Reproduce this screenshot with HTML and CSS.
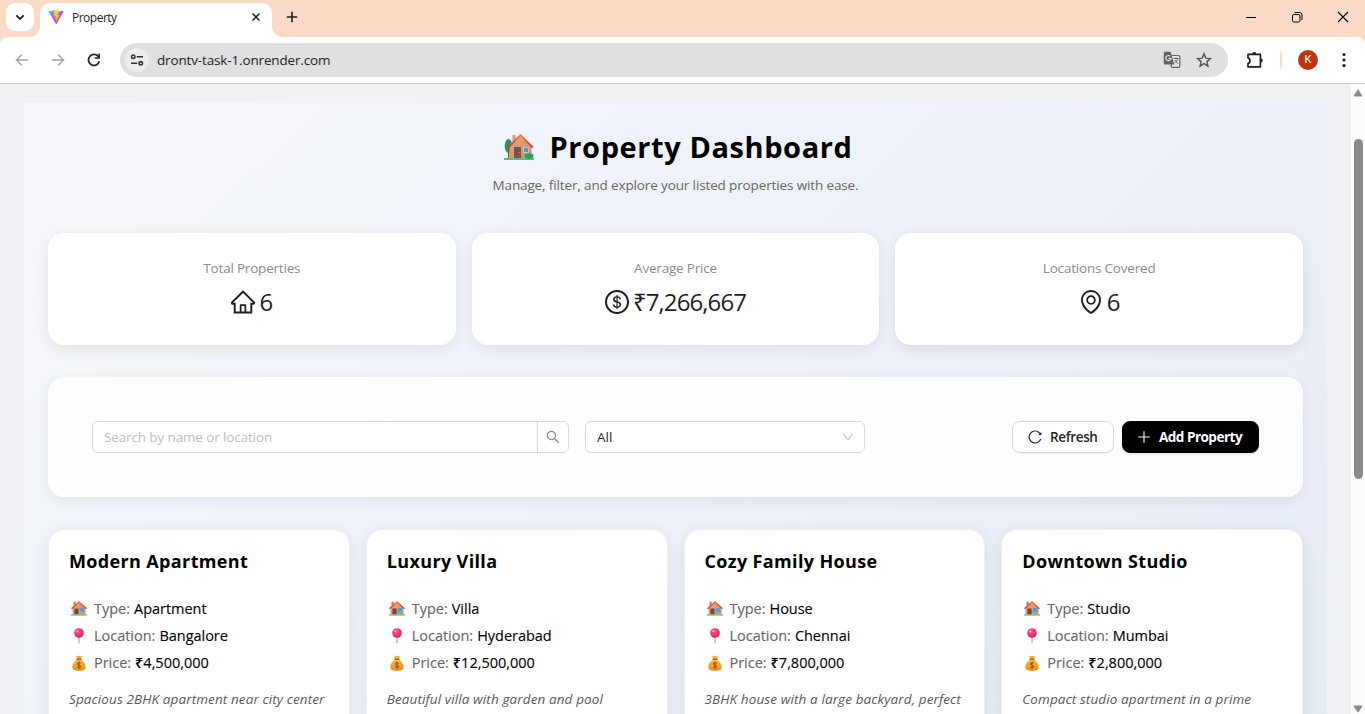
FILE: index.html
```html
<!DOCTYPE html>
<html lang="en">
<head>
<meta charset="utf-8">
<title>Property</title>
<link rel="stylesheet" href="styles.css">
</head>
<body>
<svg class="defs" width="0" height="0" aria-hidden="true">
  <defs>
    <linearGradient id="wall" x1="0" y1="0" x2="1" y2="1"><stop offset="0" stop-color="#dfab80"/><stop offset="1" stop-color="#c9906a"/></linearGradient>
    <linearGradient id="roof" x1="0" y1="0" x2="0" y2="1"><stop offset="0" stop-color="#f4793f"/><stop offset="1" stop-color="#d8343c"/></linearGradient>
    <radialGradient id="ball" cx=".4" cy=".35" r=".7"><stop offset="0" stop-color="#ff5a8c"/><stop offset="1" stop-color="#dc1c58"/></radialGradient>
    <linearGradient id="bag" x1="0" y1="0" x2="0" y2="1"><stop offset="0" stop-color="#fdbd3a"/><stop offset="1" stop-color="#e88a1c"/></linearGradient>
    <linearGradient id="vite" x1="0" y1="0" x2="1" y2="1"><stop offset="0" stop-color="#41d1ff"/><stop offset=".6" stop-color="#a24bfe"/><stop offset="1" stop-color="#bd34fe"/></linearGradient>
    <linearGradient id="bolt" x1="0" y1="0" x2="0" y2="1"><stop offset="0" stop-color="#ffdd35"/><stop offset="1" stop-color="#ff9a00"/></linearGradient>
  </defs>
  <symbol id="house-tree" viewBox="0 0 32 28">
    <ellipse cx="5.500" cy="13" rx="3.800" ry="7" fill="#2f9465"/>
    <path d="M5 14h1.500v11H5z" fill="#7a5548"/>
    <path d="M9.500 2h3v6h-3z" fill="#d99b77"/>
    <path d="M6.500 14L17.500 3.500 28.500 14v11h-22z" fill="url(#wall)"/>
    <path d="M11 14h7v11h-7z" fill="#7b5149"/>
    <circle cx="16.300" cy="19.500" r=".6" fill="#e3b55a"/>
    <path d="M20.500 14.500h5v5h-5z" fill="#2fa4e8" stroke="#f2c7a2" stroke-width=".8"/>
    <path d="M5.200 14.500L17.500 2.200 29.800 14.500" fill="none" stroke="url(#roof)" stroke-width="1.900"/>
    <path d="M1 25h30v2H1z" fill="#4fc184"/>
    <ellipse cx="26" cy="23" rx="4.500" ry="2.800" fill="#2f9a62"/>
  </symbol>
  <symbol id="house" viewBox="0 0 16 15">
    <path d="M2.500.800h2.300v4H2.500z" fill="#c9785c"/>
    <path d="M1.500 7L8 1l6.500 6v6.500h-13z" fill="url(#wall)"/>
    <path d="M3.500 7.500h4v6h-4z" fill="#70463f"/>
    <path d="M9 7h3.700v3.500H9z" fill="#2fa8ee"/>
    <path d="M.600 7.700L8 .900l7.400 6.800" fill="none" stroke="url(#roof)" stroke-width="1.500"/>
    <path d="M0 13.300h16v1.300H0z" fill="#4fc184"/>
  </symbol>
  <symbol id="pin" viewBox="0 0 16 16">
    <path d="M7.400 9h1.300v6.300H7.400z" fill="#b7a5cd"/>
    <circle cx="8" cy="5" r="4.800" fill="url(#ball)"/>
    <ellipse cx="6.300" cy="3.200" rx="1.300" ry=".9" fill="#ff9dbd"/>
  </symbol>
  <symbol id="money" viewBox="0 0 16 16">
    <path d="M5 .600L6.800 1.500 8 .400l1.300 1.100L11 .600 10.200 4H6z" fill="#f5a52a"/>
    <path d="M6 4.500C3 6.500 1.300 9.500 1.300 12c0 3 2.200 3.700 6.700 3.700s6.700-.700 6.700-3.700c0-2.500-1.700-5.500-4.700-7.500z" fill="url(#bag)"/>
    <path d="M5.500 3.700h5v1.300h-5z" fill="#a5602b"/>
    <path d="M9.700 8.200C9 7.300 6.500 7.300 6.500 8.900c0 1.700 3.200 1 3.200 2.700 0 1.500-2.600 1.600-3.400.500M8 6.800v6.600" fill="none" stroke="#8a4a20" stroke-width="1"/>
  </symbol>
</svg>

<header class="tabstrip">
  <div class="tab-search"><svg width="10" height="7" viewBox="0 0 10 7"><path d="M1.300 1.300L5 5l3.700-3.700" fill="none" stroke="#1f1f1f" stroke-width="1.800"/></svg></div>
  <div class="tab">
    <svg class="favicon" width="16" height="16" viewBox="0 0 16 16"><path d="M.300 2.200L7.500.900v3L13 1.700l2.700.500L8.200 15.500z" fill="url(#vite)"/><path d="M11.300.300L6 1.400 5.600 7.800l2-.500-.6 3.400 1.300-.4-.8 4L11.800 6l-2.100.400z" fill="url(#bolt)"/></svg>
    <span class="tab-title">Property</span>
    <svg class="tab-close" width="10" height="10" viewBox="0 0 10 10"><path d="M1.500 1.500l7 7M8.500 1.500l-7 7" stroke="#1f1f1f" stroke-width="1.500"/></svg>
  </div>
  <svg class="new-tab" width="12" height="12" viewBox="0 0 12 12"><path d="M6 .800v10.400M.800 6h10.400" stroke="#1f1f1f" stroke-width="1.600"/></svg>
  <div class="window-controls">
    <svg width="12" height="12" viewBox="0 0 12 12"><path d="M1 6.500h10" stroke="#000" stroke-width="1"/></svg>
    <svg width="12" height="12" viewBox="0 0 12 12"><rect x="1.500" y="3.500" width="7.500" height="7.500" rx="1.400" fill="none" stroke="#000"/><path d="M3.500 1.500h5.200a2.300 2.300 0 012.300 2.300V9" fill="none" stroke="#000"/></svg>
    <svg width="12" height="12" viewBox="0 0 12 12"><path d="M1 1l10 10M11 1L1 11" stroke="#000" stroke-width="1.100"/></svg>
  </div>
</header>

<nav class="toolbar">
  <svg class="nav-icon" width="14" height="14" viewBox="0 0 14 14"><path d="M13.200 7H1.700M7 1.500L1.500 7 7 12.500" fill="none" stroke="#a5a5a5" stroke-width="1.600"/></svg>
  <svg class="nav-icon" width="14" height="14" viewBox="0 0 14 14"><path d="M.800 7h11.500M7 1.500L12.500 7 7 12.500" fill="none" stroke="#a5a5a5" stroke-width="1.600"/></svg>
  <svg class="nav-icon" width="14" height="14" viewBox="0 0 14 14"><path d="M12.300 8.300A5.500 5.500 0 1 1 11 3.200l1.200 1.200" fill="none" stroke="#1f1f1f" stroke-width="1.700"/><path d="M12.900.600v5.200H7.700V4.300h3.600V.600z" fill="#1f1f1f"/></svg>
  <div class="omnibox">
    <div class="site-info"><svg width="14" height="12" viewBox="0 0 14 12"><g fill="none" stroke="#333" stroke-width="1.600"><circle cx="3.200" cy="2.700" r="1.700"/><path d="M6.800 2.700H13M1 9.300h6.200"/><circle cx="10.800" cy="9.300" r="1.700"/></g></svg></div>
    <span class="url">drontv-task-1.onrender.com</span>
    <svg class="translate" width="18" height="18" viewBox="0 0 18 18"><rect x="8.200" y="4.500" width="8.600" height="11.800" rx="1" fill="#e8e8e8" stroke="#5f6368" stroke-width="1.200"/><path d="M2 .800h5.500l3.800 12.700H2a1.200 1.200 0 01-1.200-1.200V2A1.200 1.200 0 012 .800z" fill="#5f6368"/><path d="M7.200 5.200A2.600 2.600 0 1 0 8 7.500H5.500" fill="none" stroke="#e6e6e6" stroke-width="1.200"/><path d="M10.500 7.500h5M13 6.300v1.200M14.700 7.500c-.5 2-1.800 3.500-3.200 4.700M11.800 9l3.200 3.800" fill="none" stroke="#5f6368" stroke-width="1"/></svg>
    <svg width="16" height="16" viewBox="0 0 16 16"><path d="M8 1.800l1.800 4.300 4.700.400-3.600 3.100 1.100 4.600L8 11.700l-4 2.500 1.100-4.600-3.600-3.100 4.700-.4z" fill="none" stroke="#54575b" stroke-width="1.400"/></svg>
  </div>
  <svg class="extension" width="18" height="18" viewBox="0 0 18 18"><path d="M2 3.400h12.400v12.400H2v-3.300c2.600-.500 2.600-5.100 0-5.600z" fill="none" stroke="#1f1f1f" stroke-width="1.700" stroke-linejoin="round"/><path d="M6.200 3a2 2 0 014 0zM14.800 7.500a2 2 0 010 4z" fill="#1f1f1f"/></svg>
  <span class="separator"></span>
  <span class="avatar">K</span>
  <svg class="menu" width="4" height="16" viewBox="0 0 4 16" fill="#1f1f1f"><circle cx="2" cy="2.500" r="1.600"/><circle cx="2" cy="8" r="1.600"/><circle cx="2" cy="13.500" r="1.600"/></svg>
</nav>

<div class="viewport">
  <main class="page">
    <div class="dashboard">
      <h1 class="title"><svg width="32" height="28"><use href="#house-tree"/></svg><span>Property Dashboard</span></h1>
      <p class="subtitle">Manage, filter, and explore your listed properties with ease.</p>

      <section class="stats">
        <div class="stat"><span class="stat-label">Total Properties</span>
          <div class="stat-value"><svg width="24" height="24" viewBox="64 64 896 896" fill="currentColor"><path d="M946.5 505L560.1 118.800l-25.900-25.900a31.500 31.500 0 00-44.400 0L77.500 505a63.900 63.900 0 00-18.800 46c.4 35.200 29.700 63.300 64.900 63.300h42.500V940h691.800V614.300h43.400c17.100 0 33.200-6.700 45.300-18.800a63.600 63.600 0 0018.700-45.300c0-17-6.700-33.100-18.800-45.200zM568 868H456V664h112v204zm217.900-325.700V868H632V640c0-22.100-17.900-40-40-40H432c-22.100 0-40 17.900-40 40v228H238.100V542.300h-96l370-369.700 23.100 23.100L882 542.300h-96.100z"/></svg><span>6</span></div></div>
        <div class="stat"><span class="stat-label">Average Price</span>
          <div class="stat-value"><svg width="24" height="24" viewBox="64 64 896 896" fill="currentColor"><path d="M512 64C264.600 64 64 264.600 64 512s200.600 448 448 448 448-200.600 448-448S759.400 64 512 64zm0 820c-205.400 0-372-166.600-372-372s166.600-372 372-372 372 166.600 372 372-166.600 372-372 372zm47.700-395.200l-25.400-5.900V348.600c38 5.200 61.500 29 65.500 58.200.5 4 3.900 6.900 7.900 6.900h44.900c4.700 0 8.400-4.100 8-8.800-6.100-62.300-57.400-102.300-125.900-109.200V263c0-4.400-3.600-8-8-8h-28.100c-4.400 0-8 3.600-8 8v33c-70.800 6.900-126.200 46-126.200 119 0 67.600 49.800 100.200 102.100 112.700l24.700 6.300v142.700c-44.200-5.900-69-29.500-74.100-61.300-.6-3.800-4-6.600-7.900-6.600H363c-4.700 0-8.400 4-8 8.700 4.500 55 46.200 105.600 135.200 112.100V761c0 4.400 3.600 8 8 8h28.400c4.400 0 8-3.600 8-8.100l-.2-31.700c78.300-6.900 134.300-48.800 134.300-124-.1-69.400-44.200-100.400-109-116.400zm-68.600-16.200c-5.600-1.600-10.300-3.100-15-5-33.800-12.200-49.500-31.900-49.500-57.300 0-36.300 27.500-57 64.500-61.700v124zM534.300 677V543.300c3.100.9 5.900 1.600 8.800 2.200 47.300 14.400 63.200 34.400 63.200 65.100 0 39.100-29.400 62.600-72 66.400z"/></svg><span>₹7,266,667</span></div></div>
        <div class="stat"><span class="stat-label">Locations Covered</span>
          <div class="stat-value"><svg width="24" height="24" viewBox="64 64 896 896" fill="currentColor"><path d="M854.600 289.100a362.490 362.490 0 00-79.900-115.700 370.830 370.830 0 00-118.200-77.800C610.700 76.600 562.100 67 512 67c-50.100 0-98.700 9.600-144.500 28.500-44.300 18.300-84 44.500-118.200 77.800A363.600 363.600 0 00169.400 289c-19.500 45-29.400 92.800-29.400 142 0 70.600 16.900 140.900 50.100 208.700 26.700 54.500 64 107.600 111 158.100 80.300 86.200 164.500 138.900 188.400 153a43.900 43.900 0 0022.400 6.100c7.800 0 15.500-2 22.400-6.100 23.900-14.100 108.100-66.800 188.400-153 47-50.400 84.300-103.600 111-158.100C867.100 572 884 501.800 884 431.100c0-49.200-9.900-97-29.400-142zM512 880.200c-65.900-41.900-300-207.800-300-449.100 0-77.900 31.100-151.100 87.600-206.300C356.300 169.500 431.700 139 512 139s155.700 30.500 212.400 85.900C780.900 280 812 353.200 812 431.100c0 241.300-234.100 407.200-300 449.100zm0-617.200c-97.200 0-176 78.800-176 176s78.800 176 176 176 176-78.800 176-176-78.800-176-176-176zm79.200 255.200A111.600 111.600 0 01512 551c-29.900 0-58-11.700-79.200-32.800A111.600 111.600 0 01400 439c0-29.900 11.700-58 32.800-79.200C454 338.600 482.100 327 512 327c29.900 0 58 11.600 79.200 32.800C612.400 381 624 409.100 624 439c0 29.900-11.600 58-32.800 79.200z"/></svg><span>6</span></div></div>
      </section>

      <section class="filters">
        <div class="search"><span class="placeholder">Search by name or location</span>
          <span class="search-button"><svg width="14" height="14" viewBox="64 64 896 896" fill="currentColor"><path d="M909.600 854.500L649.900 594.800C690.200 542.700 712 479 712 412c0-80.200-31.300-155.400-87.900-212.100-56.600-56.700-132-87.900-212.100-87.900s-155.500 31.300-212.100 87.900C143.200 256.500 112 331.800 112 412c0 80.100 31.300 155.500 87.900 212.100C256.500 680.800 331.800 712 412 712c67 0 130.600-21.800 182.700-62l259.700 259.600a8.200 8.200 0 0011.600 0l43.600-43.500a8.200 8.200 0 000-11.600zM570.400 570.400C528 612.700 471.800 636 412 636s-116-23.300-158.400-65.600C211.300 528 188 471.800 188 412s23.300-116.100 65.600-158.400C296 211.300 352.200 188 412 188s116.100 23.200 158.400 65.600S636 352.200 636 412s-23.300 116.100-65.600 158.400z"/></svg></span></div>
        <div class="select"><span>All</span><svg width="12" height="12" viewBox="64 64 896 896" fill="currentColor"><path d="M884 256h-75c-5.100 0-9.900 2.500-12.900 6.600L512 654.200 227.900 262.600c-3-4.100-7.800-6.600-12.900-6.600h-75c-6.500 0-10.300 7.400-6.500 12.700l352.600 486.100c12.800 17.600 39 17.600 51.700 0l352.600-486.100c3.900-5.300.1-12.700-6.400-12.700z"/></svg></div>
        <div class="actions">
          <button class="button refresh"><svg width="14" height="14" viewBox="64 64 896 896" fill="currentColor"><path d="M909.100 209.300l-56.400 44.100C775.800 155.100 656.200 92 521.900 92 290 92 102.300 279.500 102 511.500 101.700 743.700 289.800 932 521.900 932c181.300 0 335.800-115 394.600-276.100 1.500-4.200-.7-8.900-4.900-10.300l-56.700-19.500a8 8 0 00-10.100 4.800c-1.800 5-3.800 10-5.900 14.900-17.300 41-42.100 77.800-73.700 109.400A344.770 344.770 0 01655.900 829c-42.300 17.900-87.400 27-133.800 27-46.500 0-91.500-9.100-133.800-27A341.500 341.500 0 01279 755.200a342.160 342.160 0 01-73.700-109.400c-17.900-42.400-27-87.400-27-133.900s9.100-91.500 27-133.900c17.300-41 42.100-77.800 73.700-109.400 31.600-31.600 68.400-56.400 109.300-73.800 42.300-17.900 87.400-27 133.800-27 46.500 0 91.500 9.100 133.800 27a341.500 341.500 0 01109.300 73.800c9.900 9.900 19.200 20.400 27.800 31.400l-60.200 47a8 8 0 003 14.100l175.600 43c5 1.200 9.900-2.600 9.900-7.700l.8-180.900c-.1-6.600-7.800-10.300-13-6.200z"/></svg><span>Refresh</span></button>
          <button class="button add"><svg width="14" height="14" viewBox="0 0 14 14"><path d="M7 1.300v11.400M1.300 7h11.400" stroke="currentColor" stroke-width="1.100"/></svg><span>Add Property</span></button>
        </div>
      </section>

      <section class="cards">
        <article class="card">
          <h2>Modern Apartment</h2>
          <ul>
            <li><svg width="16" height="15"><use href="#house"/></svg><span>Type:</span><b>Apartment</b></li>
            <li><svg width="16" height="16"><use href="#pin"/></svg><span>Location:</span><b>Bangalore</b></li>
            <li><svg width="16" height="16"><use href="#money"/></svg><span>Price:</span><b>₹4,500,000</b></li>
          </ul>
          <p class="desc">Spacious 2BHK apartment near city center</p>
        </article>
        <article class="card">
          <h2>Luxury Villa</h2>
          <ul>
            <li><svg width="16" height="15"><use href="#house"/></svg><span>Type:</span><b>Villa</b></li>
            <li><svg width="16" height="16"><use href="#pin"/></svg><span>Location:</span><b>Hyderabad</b></li>
            <li><svg width="16" height="16"><use href="#money"/></svg><span>Price:</span><b>₹12,500,000</b></li>
          </ul>
          <p class="desc">Beautiful villa with garden and pool</p>
        </article>
        <article class="card">
          <h2>Cozy Family House</h2>
          <ul>
            <li><svg width="16" height="15"><use href="#house"/></svg><span>Type:</span><b>House</b></li>
            <li><svg width="16" height="16"><use href="#pin"/></svg><span>Location:</span><b>Chennai</b></li>
            <li><svg width="16" height="16"><use href="#money"/></svg><span>Price:</span><b>₹7,800,000</b></li>
          </ul>
          <p class="desc">3BHK house with a large backyard, perfect</p>
        </article>
        <article class="card">
          <h2>Downtown Studio</h2>
          <ul>
            <li><svg width="16" height="15"><use href="#house"/></svg><span>Type:</span><b>Studio</b></li>
            <li><svg width="16" height="16"><use href="#pin"/></svg><span>Location:</span><b>Mumbai</b></li>
            <li><svg width="16" height="16"><use href="#money"/></svg><span>Price:</span><b>₹2,800,000</b></li>
          </ul>
          <p class="desc">Compact studio apartment in a prime</p>
        </article>
      </section>
    </div>
  </main>
  <aside class="scrollbar">
    <svg width="10" height="8" viewBox="0 0 10 8"><path d="M5 .800L9 7H1z" fill="#8b8b8b" stroke="#8b8b8b" stroke-linejoin="round"/></svg>
    <span class="thumb"></span>
    <svg class="down" width="10" height="8" viewBox="0 0 10 8"><path d="M5 7.200L9 1H1z" fill="#8b8b8b" stroke="#8b8b8b" stroke-linejoin="round"/></svg>
  </aside>
</div>
</body>
</html>
```
FILE: styles.css
```css
* { box-sizing: border-box; }

body {
  margin: 0;
  width: 1365px;
  height: 714px;
  overflow: hidden;
  display: flex;
  flex-direction: column;
  background: #fcdac8;
  font-family: "Open Sans", "Noto Sans", sans-serif;
  color: #000;
}

svg { display: block; flex: none; }
.defs { position: absolute; }
h1, h2, p, ul { margin: 0; padding: 0; }

/* Tab strip */
.tabstrip { height: 37px; flex: none; display: flex; align-items: flex-start; }
.tab-search {
  width: 28px; height: 28px; margin: 3px 6px 0;
  border-radius: 9px; background: #fff;
  display: flex; align-items: center; justify-content: center;
}
.tab {
  position: relative;
  width: 232px; height: 34px; margin-top: 3px; padding: 0 11px 6px 8px;
  border-radius: 10px 10px 0 0; background: #fff;
  display: flex; align-items: center;
}
.tab::before, .tab::after {
  content: ""; position: absolute; bottom: 0; width: 10px; height: 10px;
}
.tab::before { left: -10px; background: radial-gradient(circle at 0 0, transparent 9.5px, #fff 10px); }
.tab::after { right: -10px; background: radial-gradient(circle at 100% 0, transparent 9.5px, #fff 10px); }
.tab-title { margin-left: 8px; font-size: 12px; letter-spacing: -0.5px; color: #1f1f1f; }
.tab-close { margin-left: auto; }
.new-tab { margin: 11px 0 0 14px; }
.window-controls { margin: 11px 16px 0 auto; display: flex; gap: 34px; }

/* Toolbar */
.toolbar {
  height: 47px; flex: none; padding: 0 19px 0 15px;
  display: flex; align-items: center;
  background: #fff; border-bottom: 1px solid #c9cacc;
  border-radius: 8px 8px 0 0;
}
.nav-icon { margin-right: 22px; }
.omnibox {
  width: 1108px; height: 34px; margin-left: -3px; padding: 0 16px 0 5px;
  border-radius: 17px; background: #e0e0e0;
  display: flex; align-items: center;
}
.site-info {
  width: 24px; height: 24px; border-radius: 50%; background: #ececec;
  display: flex; align-items: center; justify-content: center;
}
.url { margin-left: 8px; font-size: 13.5px; letter-spacing: -0.15px; color: #1f1f1f; }
.translate { margin: 0 15px 0 auto; }
.extension { margin-left: 18px; }
.separator { width: 2px; height: 16px; margin-left: 16px; background: #fcdac8; }
.avatar {
  width: 20px; height: 20px; margin-left: 16px; border-radius: 50%;
  background: #bf360c; color: #fff; font: 11px/20px Roboto, sans-serif; text-align: center;
}
.menu { margin-left: auto; }

/* Page */
.viewport { flex: 1; min-height: 0; display: flex; background: #f0f1f5; }
.page { flex: 1; height: 630px; padding: 19px 24px 0; overflow: hidden; }
.dashboard {
  height: 1000px; padding: 28px 24px 0;
  background: linear-gradient(135deg, #f5f7fb 0%, #ecf0f8 50%, #e2e9f4 100%);
}
.title {
  height: 32px; padding: 2px 0 0 4px; display: flex; justify-content: center; gap: 15px;
  font-size: 29px; line-height: 28px; font-weight: 700; letter-spacing: 0.58px;
}
.subtitle {
  height: 22px; margin: 11px 0 37px; text-align: center;
  font-size: 13.5px; line-height: 22px; letter-spacing: -0.13px; color: #666;
}
.stats { display: grid; grid-template-columns: repeat(3, 1fr); gap: 16px; }
.stat {
  height: 112px; padding-top: 24px; border-radius: 16px; background: #fff;
  box-shadow: 0 4px 14px rgba(0, 0, 0, 0.08);
  display: flex; flex-direction: column; align-items: center;
}
.stat-label { font-size: 13.5px; line-height: 22px; letter-spacing: -0.2px; color: #8c8c8c; }
.stat-value {
  margin-top: 4px; display: flex; align-items: center; gap: 4px;
  font-size: 24px; line-height: 38px; letter-spacing: -0.9px; color: #1f1f1f;
}

/* Filters */
.filters {
  height: 120px; margin: 32px 0; padding: 44px;
  border-radius: 16px; background: rgba(255, 255, 255, 0.85);
  box-shadow: 0 4px 14px rgba(0, 0, 0, 0.06);
  display: flex; font-size: 13.5px; line-height: 30px;
}
.search, .select { height: 32px; border: 1px solid #d9d9d9; border-radius: 6px; background: #fff; display: flex; }
.search { width: 477px; padding-left: 11px; justify-content: space-between; }
.placeholder { color: #bfbfbf; letter-spacing: -0.13px; }
.search-button {
  width: 31px; border-left: 1px solid #d9d9d9; color: #8c8c8c;
  display: flex; align-items: center; justify-content: center;
}
.select { width: 280px; margin-left: 16px; padding: 0 10px 0 11px; align-items: center; justify-content: space-between; color: #262626; }
.select svg { color: #bfbfbf; }
.actions { margin-left: auto; display: flex; gap: 8px; }
.button {
  height: 32px; padding: 0 0 0 15px; border: 1px solid #d9d9d9; border-radius: 8px;
  display: flex; align-items: center; gap: 8px; white-space: nowrap;
  font: 600 13.5px/30px "Open Sans", sans-serif;
}
.refresh {
  width: 102px; background: #fff; color: #262626; font-weight: 600; letter-spacing: -0.35px;
  box-shadow: 0 2px 0 rgba(0, 0, 0, 0.02);
}
.add {
  width: 137px; padding-left: 14px; border-color: #000; background: #000; color: #fff;
  font-weight: 700; letter-spacing: -0.5px; box-shadow: 0 2px 0 rgba(5, 145, 255, 0.1);
}

/* Property cards */
.cards { display: grid; grid-template-columns: repeat(4, minmax(0, 1fr)); gap: 16px; }
.card {
  height: 330px; padding: 17px 20px 0; border: 1px solid #f0f0f0; border-radius: 16px;
  background: #fff; box-shadow: 0 4px 16px rgba(0, 0, 0, 0.08); white-space: nowrap;
}
.card h2 { font-size: 18px; line-height: 28px; font-weight: 700; letter-spacing: 0.36px; }
.card ul { margin-top: 20px; list-style: none; }
.card li { height: 27px; padding-left: 2px; display: flex; align-items: center; font-size: 14.5px; line-height: 20px; }
.card li span { margin: 0 4px 0 7px; color: #666; }
.card li span, .card li b { font-weight: 500; letter-spacing: -0.02px; -webkit-text-stroke: 0.12px; }
.desc { margin-top: 12px; font-size: 13.5px; line-height: 22px; font-style: italic; letter-spacing: 0.11px; color: #595959; }

/* Scrollbar */
.scrollbar {
  width: 14px; padding: 5px 0 1px 2px; background: #fcfcfc;
  display: flex; flex-direction: column;
}
.thumb { width: 9px; height: 340px; margin: 42px 0 0 1px; border-radius: 5px; background: #8b8b8b; }
.down { margin-top: auto; }
```
